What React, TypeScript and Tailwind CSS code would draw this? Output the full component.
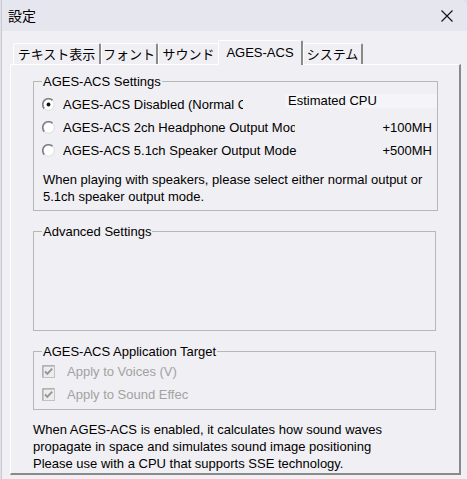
import React from 'react';

const Radio = ({ checked }: { checked?: boolean }) => (
  <svg width="13" height="13" viewBox="0 0 13 13" className="shrink-0">
    <circle cx="6.5" cy="6.5" r="5.75" fill="#fff" />
    <path d="M2.43 10.57A5.75 5.75 0 0 1 10.57 2.43" fill="none" stroke="#7e7e7e" strokeWidth="1.6" />
    <path d="M10.57 2.43A5.75 5.75 0 0 1 2.43 10.57" fill="none" stroke="#dcdcdc" strokeWidth="1" />
    {checked && <circle cx="6.5" cy="6.5" r="1.9" fill="#111" />}
  </svg>
);

const DisabledCheck = () => (
  <svg width="13" height="13" viewBox="0 0 13 13" className="shrink-0">
    <rect x="0.5" y="0.5" width="12" height="12" fill="#ececec" stroke="#c2c2c2" />
    <path d="M1 12V1H12" fill="none" stroke="#a0a0a0" />
    <path d="M3 6.3l2.3 2.5L10.2 3.6" fill="none" stroke="#959595" strokeWidth="1.9" />
  </svg>
);

const tabs = [
  { label: 'テキスト表示', w: 'w-[88px]' },
  { label: 'フォント', w: 'w-[57px]' },
  { label: 'サウンド', w: 'w-[60px]', noRight: true },
  { label: 'AGES-ACS', w: 'w-[85px]', active: true },
  { label: 'システム', w: 'w-[60px]' },
];

const App: React.FC = () => {
  return (
    <div className="w-[467px] h-[479px] overflow-hidden bg-[#dfe0ea] text-[13px] text-black font-['Liberation_Sans','Noto_Sans_CJK_JP',sans-serif]">
      <div className="h-full ml-[1px] flex flex-col bg-[#f0eff3] border-l border-[#c9c9d2] rounded-tr-[8px]">
        {/* title bar */}
        <div className="h-[31px] shrink-0 flex items-center justify-between pl-[6px] pr-[14px] bg-[#e6e6ef] rounded-tr-[8px]">
          <span className="text-[14px] leading-[16px]">設定</span>
          <svg width="12" height="12" viewBox="0 0 12 12">
            <path d="M0.5 0.5L11.5 11.5M11.5 0.5L0.5 11.5" stroke="#111" strokeWidth="1.1" />
          </svg>
        </div>

        {/* tab strip */}
        <div className="flex items-end h-[24px] mt-[9px] ml-[11px] shrink-0">
          {tabs.map(t =>
            t.active ? (
              <div
                key={t.label}
                className={`${t.w} relative z-10 h-[25px] -mb-[1px] flex items-center justify-center pb-[1px] bg-[#f0eff3] border-l border-t border-white border-r-2 border-r-[#8a8a8a] rounded-t-[2px] whitespace-nowrap`}
              >
                {t.label}
              </div>
            ) : (
              <div
                key={t.label}
                className={`${t.w} h-[21px] flex items-center justify-center pt-[1px] border-l border-t border-white ${t.noRight ? '' : 'border-r-2 border-r-[#8a8a8a]'} rounded-t-[2px] whitespace-nowrap`}
              >
                {t.label}
              </div>
            )
          )}
        </div>

        {/* panel */}
        <div className="ml-[8px] w-[451px] h-[411px] shrink-0 flex flex-col pt-[9px] pl-[22px] border-l border-t border-white border-r-2 border-b-2 border-r-[#8a8a8a] border-b-[#8a8a8a]">
          <fieldset className="w-[403px] h-[137px] shrink-0 border border-[#b7b7b7]">
            <legend className="ml-[8px] px-[1px] leading-[15px]">AGES-ACS Settings</legend>
            <div className="pt-[4px]">
              <div className="flex items-center h-[23px] pl-[8px]">
                <Radio checked />
                <span className="ml-[8px] w-[180px] shrink-0 overflow-hidden whitespace-nowrap">AGES-ACS Disabled (Normal Output)</span>
                <span className="ml-[42px] w-[152px] h-[14px] shrink-0 self-start mt-[1px] pl-[3px] leading-[14px] bg-[#f5f4f8] whitespace-nowrap overflow-hidden">
                  Estimated CPU
                </span>
              </div>
              <div className="flex items-center h-[23px] pl-[8px]">
                <Radio />
                <span className="ml-[8px] w-[232px] shrink-0 overflow-hidden whitespace-nowrap">AGES-ACS 2ch Headphone Output Mode</span>
                <span className="ml-auto pr-[5px] whitespace-nowrap">+100MH</span>
              </div>
              <div className="flex items-center h-[23px] pl-[8px]">
                <Radio />
                <span className="ml-[8px] w-[238px] shrink-0 overflow-hidden whitespace-nowrap">AGES-ACS 5.1ch Speaker Output Mode</span>
                <span className="ml-auto pr-[5px] whitespace-nowrap">+500MH</span>
              </div>
              <p className="mt-[9px] pl-[9px] leading-[17px] whitespace-nowrap">
                When playing with speakers, please select either normal output or
                <br />
                5.1ch speaker output mode.
              </p>
            </div>
          </fieldset>

          <fieldset className="mt-[13px] w-[403px] h-[107px] shrink-0 border border-[#b7b7b7]">
            <legend className="ml-[8px] px-[1px] leading-[15px]">Advanced Settings</legend>
          </fieldset>

          <fieldset className="mt-[13px] w-[403px] h-[66px] shrink-0 border border-[#b7b7b7]">
            <legend className="ml-[8px] px-[1px] leading-[15px]">AGES-ACS Application Target</legend>
            <div className="pt-[1px]">
              <div className="flex items-center h-[23px] pl-[8px] text-[#a2a2a2]">
                <DisabledCheck />
                <span className="ml-[12px] whitespace-nowrap">Apply to Voices (V)</span>
              </div>
              <div className="flex items-center h-[23px] pl-[8px] text-[#a2a2a2]">
                <DisabledCheck />
                <span className="ml-[12px] whitespace-nowrap">Apply to Sound Effec</span>
              </div>
            </div>
          </fieldset>

          <p className="mt-[11px] leading-[17px] whitespace-nowrap">
            When AGES-ACS is enabled, it calculates how sound waves
            <br />
            propagate in space and simulates sound image positioning
            <br />
            Please use with a CPU that supports SSE technology.
          </p>
        </div>
      </div>
    </div>
  );
};

export default App;
